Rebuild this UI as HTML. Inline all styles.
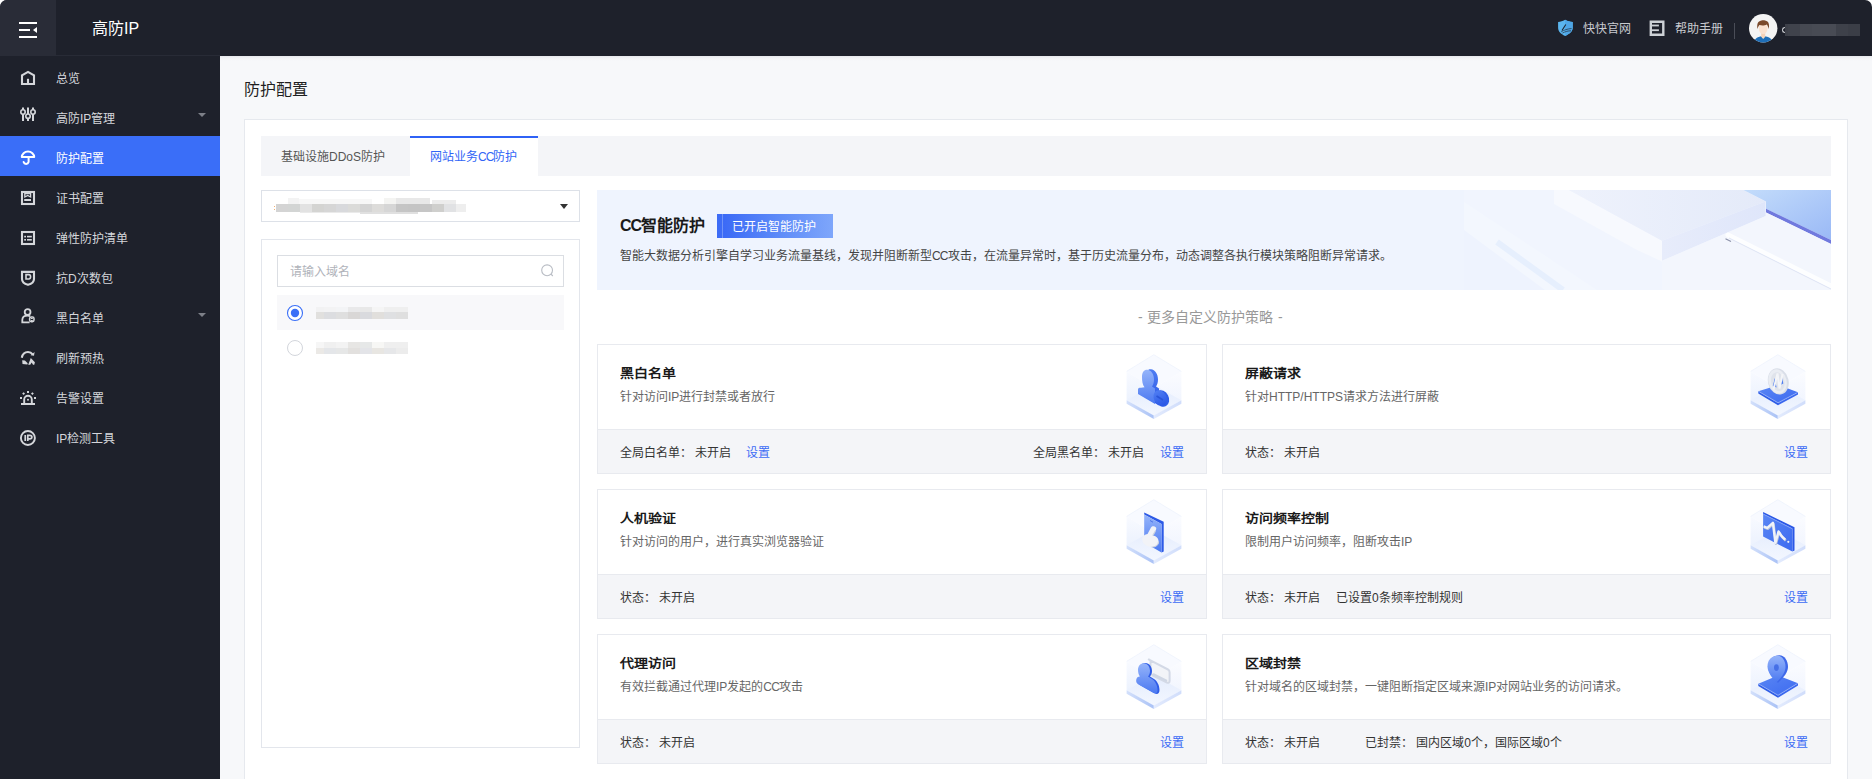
<!DOCTYPE html>
<html lang="zh-CN"><head><meta charset="utf-8">
<style>
*{margin:0;padding:0;box-sizing:border-box}
html,body{width:1872px;height:779px;overflow:hidden;background:#fff}
body{font-family:"Liberation Sans",sans-serif;font-size:12px;color:#333;position:relative}
.a{position:absolute;white-space:nowrap;line-height:20px}
#hdr{position:absolute;left:0;top:0;width:1872px;height:56px;background:#1e212b;border-radius:7px 7px 0 0;overflow:hidden}
#burger{position:absolute;left:0;top:0;width:56px;height:56px;background:#292c37}
#side{position:absolute;left:0;top:56px;width:220px;height:723px;background:#1e212b}
.mi{position:absolute;left:0;width:220px;height:40px}
.mi .t{position:absolute;left:56px;top:13px;line-height:20px;font-size:12px;color:#d5d7db}
.mi svg{position:absolute;left:16px;top:10px}
.mi.on{background:#3a6ef8}
.mi.on .t{color:#fff}
.caret{position:absolute;left:198px;top:17px;width:0;height:0;border-left:4px solid transparent;border-right:4px solid transparent;border-top:4px solid #7d8088}
#main{position:absolute;left:220px;top:56px;width:1652px;height:723px;background:linear-gradient(180deg,#e6e8ec 0,#f2f3f6 2px,#f7f8fa 5px)}
#panel{position:absolute;left:244px;top:119px;width:1604px;height:700px;background:#fff;border:1px solid #e6e9ee}
#tabs{position:absolute;left:261px;top:136px;width:1570px;height:40px;background:#f4f5f8}
.tab{position:absolute;top:0;height:40px}
.tab.on{background:#fff;border-top:2px solid #2f62f6}
.box{position:absolute;border:1px solid #dfe3ea;background:#fff}
.card{position:absolute;width:610px;height:130px;border:1px solid #e8eaef;background:#fff}
.card .ft{position:absolute;left:0;right:0;top:84px;height:44px;background:#f4f5f8;border-top:1px solid #e8eaef}
.card .tt{position:absolute;left:22px;top:19px;font-size:14px;font-weight:bold;color:#1a1a1a;line-height:20px;white-space:nowrap;transform:scaleY(.88);transform-origin:0 10px}
.card .ds{position:absolute;left:22px;top:42px;font-size:12px;color:#666;line-height:20px;white-space:nowrap}
.card .fx{position:absolute;top:13px;font-size:12px;color:#333;line-height:20px;white-space:nowrap}
.lk,.card .fx.lk{color:#3c6cf5}
.card svg.ic{position:absolute;left:524px;top:5px}
</style></head><body>
<svg width="0" height="0" style="position:absolute">
<defs>
<linearGradient id="cbL" x1="0" y1="0" x2="0" y2="1"><stop offset="0" stop-color="#f8faff"/><stop offset="1" stop-color="#e6eefd"/></linearGradient>
<linearGradient id="cbR" x1="0" y1="0" x2="0" y2="1"><stop offset="0" stop-color="#fbfcff"/><stop offset="1" stop-color="#edf2fe"/></linearGradient>
<linearGradient id="plL" x1="0" y1="0" x2="1" y2="0"><stop offset="0" stop-color="#d3e0fb"/><stop offset="1" stop-color="#aac2f6"/></linearGradient>
<linearGradient id="plR" x1="0" y1="0" x2="1" y2="0"><stop offset="0" stop-color="#e3ebfd"/><stop offset="1" stop-color="#d0ddfb"/></linearGradient>
<linearGradient id="plT" x1="0" y1="0" x2="0" y2="1"><stop offset="0" stop-color="#e4ecfd"/><stop offset="1" stop-color="#f3f7ff"/></linearGradient>
<linearGradient id="bl" x1="0" y1="0" x2="0" y2="1"><stop offset="0" stop-color="#95b4fa"/><stop offset="1" stop-color="#4a78f1"/></linearGradient>
<linearGradient id="bd" x1="0" y1="0" x2="0" y2="1"><stop offset="0" stop-color="#4f7df2"/><stop offset="1" stop-color="#2a57e6"/></linearGradient>
<linearGradient id="pad" x1="0" y1="0" x2="1" y2="1"><stop offset="0" stop-color="#5a86f4"/><stop offset="1" stop-color="#3c6af0"/></linearGradient>
<g id="cube">
  <path d="M4.6 21.4L31.8 38V65.5L4.6 50.3Z" fill="url(#cbL)"/>
  <path d="M59.4 21.4L31.8 38V65.5L59.4 50.3Z" fill="url(#cbR)"/>
  <path d="M31.8 4.7L59.4 21.4L31.8 38L4.6 21.4Z" fill="#f8faff"/>
  <path d="M31.8 4.7L59.4 21.4M31.8 4.7L4.6 21.4" stroke="#edf2fd" stroke-width=".8" fill="none"/>
  <path d="M4.6 50.3L31.8 35L59.4 50.3L31.8 65.5Z" fill="url(#plT)"/>
  <path d="M4.6 50.3L31.8 65.5V68.9L4.6 53.7Z" fill="url(#plL)"/>
  <path d="M59.4 50.3L31.8 65.5V68.9L59.4 53.7Z" fill="url(#plR)"/>
</g>
</defs></svg>
<div id="hdr">
  <div id="burger">
    <svg width="56" height="56" style="position:absolute;left:0;top:0">
      <rect x="19" y="22" width="18" height="2" fill="#fff"/>
      <rect x="19" y="29" width="11" height="2" fill="#fff"/>
      <rect x="19" y="36" width="18" height="2" fill="#fff"/>
      <path d="M33 30L37 27V33Z" fill="#fff"/>
    </svg>
  </div>
  <div class="a" style="left:92px;top:19px;font-size:16px;color:#fff">高防IP</div>
  <div style="position:absolute;left:56px;top:55px;width:164px;height:1px;background:#282b36"></div>
  <!-- right header -->
  <svg width="18" height="18" style="position:absolute;left:1557px;top:19px" viewBox="0 0 18 18">
    <path d="M1.1 2.9C3.5 2.9 5.5 2.3 8.1 0.8C10.7 2.3 12.7 2.9 15.7 2.9V8.5C15.7 12.5 12.5 15 8.1 16.9C3.8 15 1.1 12.5 1.1 8.5Z" fill="#5bb5ee"/>
    <path d="M8.1 0.8C10.7 2.3 12.7 2.9 15.7 2.9V8.5C15.7 12.5 12.5 15 8.1 16.9Z" fill="#4ea6e6"/>
    <path d="M8.8 5.5L5 11.5" stroke="#1e212b" stroke-width="1.1"/>
    <path d="M4.2 12.8C7 11 10 10 14.5 9.5M5.5 14C8.5 12.5 11 11.8 14 11.8" stroke="#1e212b" stroke-width=".8" fill="none" opacity=".8"/>
  </svg>
  <div class="a" style="left:1583px;top:19px;font-size:12px;color:#c9cbd0">快快官网</div>
  <svg width="16" height="16" style="position:absolute;left:1649px;top:20px" viewBox="0 0 16 16">
    <path d="M1.8 1.8H14.3V14.7H1.8Z" stroke="#cdd1d6" stroke-width="2.4" fill="none"/>
    <rect x="1.8" y="4.6" width="8.1" height="1.8" fill="#cdd1d6"/>
    <rect x="1.8" y="9.3" width="8.1" height="1.8" fill="#cdd1d6"/>
  </svg>
  <div class="a" style="left:1675px;top:19px;font-size:12px;color:#c9cbd0">帮助手册</div>
  <div style="position:absolute;left:1734px;top:23px;width:1px;height:16px;background:#4a4d57"></div>
  <svg width="29" height="29" style="position:absolute;left:1749px;top:14px" viewBox="0 0 29 29">
    <circle cx="14.2" cy="14.2" r="14.2" fill="#f4f4f4"/>
    <clipPath id="avc"><circle cx="14.2" cy="14.2" r="14.2"/></clipPath>
    <g clip-path="url(#avc)">
      <path d="M4.5 29C5.5 24.5 8.5 22.5 14.2 22C20 22.5 23 24.5 24 29Z" fill="#1f6fb8"/>
      <path d="M11.8 22.2L14.2 25L16.6 22.2Z" fill="#f3e0c8"/>
      <path d="M12.2 18.5H16.2V22.5L14.2 24L12.2 22.5Z" fill="#f6d2b8"/>
      <ellipse cx="14.2" cy="14.5" rx="4.3" ry="5.5" fill="#fbe2d0"/>
      <path d="M8.5 15C7.8 11 8.5 7.8 11 7C12.5 6 16 6 17.5 7C20 8 20.5 11 19.7 15C19 12.5 18.5 11 17.5 10.5C16 11.5 13 11.8 10.5 11C9.5 12 9 13 8.5 15Z" fill="#7b4a2b"/>
    </g>
  </svg>
  <div style="position:absolute;left:1785px;top:24px;width:3px;height:12px;background:#3d4049"></div><div style="position:absolute;left:1788px;top:24px;width:12px;height:12px;background:#40434c"></div><div style="position:absolute;left:1800px;top:24px;width:12px;height:12px;background:#464952"></div><div style="position:absolute;left:1812px;top:24px;width:24px;height:12px;background:#484b54"></div><div style="position:absolute;left:1836px;top:24px;width:12px;height:12px;background:#3e414a"></div><div style="position:absolute;left:1848px;top:24px;width:12px;height:12px;background:#3b3e47"></div><div style="position:absolute;left:1782px;top:27px;width:3px;height:6px;border:1.5px solid #c8cacf;border-right:none;border-radius:3px 0 0 3px"></div>
</div>
<div id="side">
  <div class="mi" style="top:0">
    <svg width="24" height="24" viewBox="0 0 24 24"><path d="M6 18V9.3L12 5.9L18 9.3V18Z" stroke="#d5d7db" stroke-width="2.1" fill="none" stroke-linejoin="miter"/><path d="M12 12.8V18" stroke="#d5d7db" stroke-width="2.1"/></svg>
    <div class="t">总览</div>
  </div>
  <div class="mi" style="top:40px">
    <svg width="24" height="24" viewBox="0 0 24 24" style="top:8px"><g stroke="#d5d7db" stroke-width="2" fill="none"><path d="M7 3.5V17M12 3.5V17M17 3.5V17"/></g><g stroke="#d5d7db" stroke-width="1.6" fill="#1e212b"><circle cx="7" cy="8" r="2.2"/><circle cx="12" cy="12.2" r="2.2"/><circle cx="17" cy="8" r="2.2"/></g></svg>
    <div class="t">高防IP管理</div>
    <div class="caret"></div>
  </div>
  <div class="mi on" style="top:80px">
    <svg width="24" height="24" viewBox="0 0 24 24"><path d="M5.8 11.1A6.2 5.6 0 0 1 18.2 11.1Z" stroke="#fff" stroke-width="2" fill="none" stroke-linejoin="round"/><path d="M12.6 11.5V16A2.6 2.6 0 0 1 7.6 16" stroke="#fff" stroke-width="2" fill="none" stroke-linecap="round"/></svg>
    <div class="t">防护配置</div>
  </div>
  <div class="mi" style="top:120px">
    <svg width="24" height="24" viewBox="0 0 24 24"><rect x="6" y="6" width="12" height="12" stroke="#d5d7db" stroke-width="2.1" fill="none"/><path d="M8.8 7.6H14.6V11L11.7 9.4L8.8 11Z" stroke="#d5d7db" stroke-width="1.3" fill="none" stroke-linejoin="miter"/><rect x="8.2" y="13" width="6.8" height="2" fill="#d5d7db"/></svg>
    <div class="t">证书配置</div>
  </div>
  <div class="mi" style="top:160px">
    <svg width="24" height="24" viewBox="0 0 24 24"><rect x="6" y="6" width="12" height="12" stroke="#d5d7db" stroke-width="2.1" fill="none"/><rect x="8.2" y="9.8" width="1.8" height="1.6" fill="#d5d7db"/><rect x="11" y="9.8" width="4.8" height="1.6" fill="#d5d7db"/><rect x="8.2" y="13" width="1.8" height="1.6" fill="#d5d7db"/><rect x="11" y="13" width="4.8" height="1.6" fill="#d5d7db"/></svg>
    <div class="t">弹性防护清单</div>
  </div>
  <div class="mi" style="top:200px">
    <svg width="24" height="24" viewBox="0 0 24 24"><path d="M6 5.9H18V13C18 16 15 18 12 18.8C9 18 6 16 6 13Z" stroke="#d5d7db" stroke-width="2.1" fill="none"/><path d="M10 8.6H12.8C14 8.6 14.6 9.4 14.6 10.8C14.6 12.2 14 13 12.8 13H10Z" stroke="#d5d7db" stroke-width="1.6" fill="none"/></svg>
    <div class="t">抗D次数包</div>
  </div>
  <div class="mi" style="top:240px">
    <svg width="24" height="24" viewBox="0 0 24 24"><circle cx="11.6" cy="6" r="2.9" stroke="#d5d7db" stroke-width="1.8" fill="none"/><path d="M14.2 10.2C13.4 9.8 12.6 9.7 11.6 9.7C8.2 9.7 6.3 11.6 6.3 14V16.3H13.6" stroke="#d5d7db" stroke-width="1.8" fill="none"/><rect x="13.6" y="10.9" width="4.4" height="4.8" rx="1.6" stroke="#d5d7db" stroke-width="1.5" fill="none"/><rect x="14.8" y="12" width="2" height="1" fill="#d5d7db"/><rect x="14.8" y="14" width="2" height="1" fill="#d5d7db"/></svg>
    <div class="t">黑白名单</div>
    <div class="caret"></div>
  </div>
  <div class="mi" style="top:280px">
    <svg width="24" height="24" viewBox="0 0 24 24"><path d="M5.8 11.7C6.5 8 9 6 12 6C14 6 15.5 6.8 16.6 8.3" stroke="#d5d7db" stroke-width="2.1" fill="none"/><path d="M18.6 5.9L18 9.7L14.6 9.3Z" fill="#d5d7db"/><path d="M6.2 14.2L8.9 14.5L11.7 17.3L11.4 18.6L6.5 18Z" fill="#d5d7db"/><path d="M12.2 18.8L14.8 12L18.9 16.2L18.3 18.8L17 18.8L15.7 16.6L14.2 18.8Z" fill="#d5d7db"/></svg>
    <div class="t">刷新预热</div>
  </div>
  <div class="mi" style="top:320px">
    <svg width="24" height="24" viewBox="0 0 24 24"><path d="M8.2 17V13.5A3.8 3.8 0 0 1 15.8 13.5V17" stroke="#d5d7db" stroke-width="1.9" fill="none"/><rect x="5" y="17" width="14" height="2" fill="#d5d7db"/><rect x="11" y="5" width="2" height="2" fill="#d5d7db"/><rect x="4" y="11" width="2" height="2" fill="#d5d7db"/><rect x="18" y="11" width="2" height="2" fill="#d5d7db"/><rect x="6.6" y="6.6" width="2" height="2" transform="rotate(45 7.6 7.6)" fill="#d5d7db"/><rect x="15.4" y="6.6" width="2" height="2" transform="rotate(45 16.4 7.6)" fill="#d5d7db"/><circle cx="12" cy="13.8" r="1" fill="#d5d7db"/></svg>
    <div class="t">告警设置</div>
  </div>
  <div class="mi" style="top:360px">
    <svg width="24" height="24" viewBox="0 0 24 24"><circle cx="11.9" cy="12" r="7" stroke="#d5d7db" stroke-width="1.9" fill="none"/><rect x="8.4" y="9" width="1.7" height="6" fill="#d5d7db"/><path d="M11.8 15V9.3H13.8C15.2 9.3 15.9 10 15.9 11.1C15.9 12.2 15.2 12.9 13.8 12.9H11.8" stroke="#d5d7db" stroke-width="1.7" fill="none"/></svg>
    <div class="t">IP检测工具</div>
  </div>
</div>
<div id="main"></div>
<div class="a" style="left:244px;top:80px;font-size:16px;color:#1f1f1f">防护配置</div>
<div id="panel"></div>
<div id="tabs">
  <div class="tab" style="left:0;width:149px"><div class="a" style="left:20px;top:11px;color:#555">基础设施DDoS防护</div></div>
  <div class="tab on" style="left:149px;width:128px"><div class="a" style="left:20px;top:9px;color:#3165f6">网站业务<span style="letter-spacing:-1px">CC</span>防护</div></div>
</div>
<!-- dropdown -->
<div class="box" style="left:261px;top:190px;width:319px;height:32px;border-color:#dde1e8"></div>
<div style="position:absolute;left:276px;top:204px;width:12px;height:8px;background:#d4d4d4"></div><div style="position:absolute;left:288px;top:204px;width:12px;height:8px;background:#d3d5d4"></div><div style="position:absolute;left:300px;top:204px;width:12px;height:8px;background:#e2e2e2"></div><div style="position:absolute;left:312px;top:204px;width:12px;height:8px;background:#d4d4d2"></div><div style="position:absolute;left:324px;top:204px;width:12px;height:8px;background:#d6d6d6"></div><div style="position:absolute;left:336px;top:204px;width:12px;height:8px;background:#d8d9dc"></div><div style="position:absolute;left:348px;top:204px;width:12px;height:8px;background:#dbdbd9"></div><div style="position:absolute;left:360px;top:204px;width:12px;height:8px;background:#d4d4d4"></div><div style="position:absolute;left:372px;top:204px;width:12px;height:8px;background:#dddcda"></div><div style="position:absolute;left:384px;top:204px;width:12px;height:8px;background:#d6d6d6"></div><div style="position:absolute;left:396px;top:204px;width:12px;height:8px;background:#c5c5c5"></div><div style="position:absolute;left:408px;top:204px;width:12px;height:8px;background:#c4c4c4"></div><div style="position:absolute;left:420px;top:204px;width:12px;height:8px;background:#c6c6c6"></div><div style="position:absolute;left:432px;top:204px;width:12px;height:8px;background:#cfcfcd"></div><div style="position:absolute;left:444px;top:204px;width:12px;height:8px;background:#e1e2e4"></div><div style="position:absolute;left:456px;top:204px;width:10px;height:8px;background:#eeeeee"></div><div style="position:absolute;left:288px;top:198px;width:11px;height:6px;background:#f3f3f3"></div><div style="position:absolute;left:299px;top:199px;width:73px;height:5px;background:#f7f7f7"></div><div style="position:absolute;left:384px;top:198px;width:12px;height:6px;background:#f4f4f2"></div><div style="position:absolute;left:396px;top:198px;width:34px;height:6px;background:#e8e8e8"></div><div style="position:absolute;left:432px;top:200px;width:24px;height:4px;background:#ececec"></div><div style="position:absolute;left:300px;top:212px;width:60px;height:1px;background:#eaeaea"></div><div style="position:absolute;left:360px;top:212px;width:58px;height:2px;background:#e0e0e0"></div><div style="position:absolute;left:274px;top:206px;width:1px;height:1px;background:#f5b070"></div><div style="position:absolute;left:274px;top:209px;width:1px;height:1px;background:#f5b070"></div>
<div style="position:absolute;left:560px;top:204px;width:0;height:0;border-left:4px solid transparent;border-right:4px solid transparent;border-top:5px solid #333"></div>
<!-- left panel -->
<div class="box" style="left:261px;top:239px;width:319px;height:509px;border-color:#e3e6ec"></div>
<div class="box" style="left:277px;top:255px;width:287px;height:32px;border-color:#dbdee3"></div>
<div class="a" style="left:290px;top:262px;color:#b0b3ba">请输入域名</div>
<svg width="16" height="16" style="position:absolute;left:540px;top:263px" viewBox="0 0 16 16"><circle cx="7.1" cy="7.3" r="5.4" stroke="#b8bcc4" stroke-width="1.1" fill="none"/><path d="M11 11.2L12.8 13" stroke="#b8bcc4" stroke-width="1.1"/></svg>
<div style="position:absolute;left:277px;top:295px;width:287px;height:35px;background:#f8f8fa"></div>
<svg width="18" height="18" style="position:absolute;left:286px;top:304px" viewBox="0 0 18 18"><circle cx="9" cy="9" r="7.5" stroke="#3a6ff7" stroke-width="1.1" fill="#fff"/><circle cx="9" cy="9" r="4.2" fill="#3a6ff7"/></svg>

<svg width="18" height="18" style="position:absolute;left:286px;top:339px" viewBox="0 0 18 18"><circle cx="9" cy="9" r="7.5" stroke="#d3d6dc" stroke-width="1" fill="#fff"/></svg>
<div style="position:absolute;left:316px;top:307px;width:8px;height:5px;background:#f2f2f3"></div><div style="position:absolute;left:316px;top:312px;width:8px;height:7px;background:#e1e0de"></div><div style="position:absolute;left:316px;top:342px;width:8px;height:6px;background:#f6f6f6"></div><div style="position:absolute;left:316px;top:348px;width:8px;height:6px;background:#ebe9e6"></div><div style="position:absolute;left:324px;top:307px;width:12px;height:5px;background:#f3f3f4"></div><div style="position:absolute;left:324px;top:312px;width:12px;height:7px;background:#dcdde0"></div><div style="position:absolute;left:324px;top:342px;width:12px;height:6px;background:#f0f0f0"></div><div style="position:absolute;left:324px;top:348px;width:12px;height:6px;background:#e4e6e9"></div><div style="position:absolute;left:336px;top:307px;width:12px;height:5px;background:#f3f4f6"></div><div style="position:absolute;left:336px;top:312px;width:12px;height:7px;background:#dfdfdf"></div><div style="position:absolute;left:336px;top:342px;width:12px;height:6px;background:#f3f3f3"></div><div style="position:absolute;left:336px;top:348px;width:12px;height:6px;background:#e6e7e7"></div><div style="position:absolute;left:348px;top:307px;width:12px;height:5px;background:#e9e9ea"></div><div style="position:absolute;left:348px;top:312px;width:12px;height:7px;background:#d9d7d6"></div><div style="position:absolute;left:348px;top:342px;width:12px;height:6px;background:#e7e6e4"></div><div style="position:absolute;left:348px;top:348px;width:12px;height:6px;background:#e2e0de"></div><div style="position:absolute;left:360px;top:307px;width:12px;height:5px;background:#e8e8e8"></div><div style="position:absolute;left:360px;top:312px;width:12px;height:7px;background:#d9dade"></div><div style="position:absolute;left:360px;top:342px;width:12px;height:6px;background:#e6e8e8"></div><div style="position:absolute;left:360px;top:348px;width:12px;height:6px;background:#e3e4e8"></div><div style="position:absolute;left:372px;top:307px;width:12px;height:5px;background:#f5f5f5"></div><div style="position:absolute;left:372px;top:312px;width:12px;height:7px;background:#e1dfdc"></div><div style="position:absolute;left:372px;top:342px;width:12px;height:6px;background:#f7f7f5"></div><div style="position:absolute;left:372px;top:348px;width:12px;height:6px;background:#e8e6e2"></div><div style="position:absolute;left:384px;top:307px;width:12px;height:5px;background:#efefef"></div><div style="position:absolute;left:384px;top:312px;width:12px;height:7px;background:#dfe0e2"></div><div style="position:absolute;left:384px;top:342px;width:12px;height:6px;background:#efefef"></div><div style="position:absolute;left:384px;top:348px;width:12px;height:6px;background:#e6e7e9"></div><div style="position:absolute;left:396px;top:307px;width:12px;height:5px;background:#efefef"></div><div style="position:absolute;left:396px;top:312px;width:12px;height:7px;background:#dfdfdf"></div><div style="position:absolute;left:396px;top:342px;width:12px;height:6px;background:#efefef"></div><div style="position:absolute;left:396px;top:348px;width:12px;height:6px;background:#ececec"></div>
<!-- banner -->
<div id="banner" style="position:absolute;left:597px;top:190px;width:1234px;height:100px;background:linear-gradient(90deg,#eff4fe 0,#eff4fe 70%,#f0f4fd 100%);overflow:hidden">
<svg width="1234" height="100" style="position:absolute;left:0;top:0" viewBox="0 0 1234 100">
<defs>
<linearGradient id="bnB" x1="0" y1="0" x2="1" y2="1"><stop offset="0" stop-color="#c3dcfb"/><stop offset="1" stop-color="#9ab9f6"/></linearGradient>
<linearGradient id="bnT" x1="0" y1="0" x2="1" y2="0"><stop offset="0" stop-color="#eef2fc"/><stop offset="1" stop-color="#e4eaf9"/></linearGradient>
<linearGradient id="bnF" x1="0" y1="0" x2="1" y2="0"><stop offset="0" stop-color="#e7ecfb"/><stop offset="1" stop-color="#dfe6fa"/></linearGradient>
</defs>
<path d="M867 0H1234V100H867Z" fill="#f1f5fe"/>
<path d="M867 32L957 100H867Z" fill="#eef3fe"/>
<path d="M867 40L948 100H1000L867 12Z" fill="#f3f7fe"/>
<path d="M900 52L966 100" stroke="#e6effd" stroke-width="6"/>
<path d="M957 0H972L1065 50.7V71.4L1040 60L957 14Z" fill="#f7f9fe"/>
<path d="M972 0H1146.5L1168.5 11.4L1065 50.7Z" fill="url(#bnT)"/>
<path d="M1065 50.7L1168.5 11.4V26L1065 70.8Z" fill="url(#bnF)"/>
<path d="M1146.5 0H1234V50L1169 18.7V11.4Z" fill="url(#bnB)"/>
<path d="M1169 18.7L1234 50V54L1169 22.5Z" fill="#7079de"/>
<path d="M1169 22.5L1234 54V100H1065V70.8L1169 26Z" fill="#f3f6fd"/>
<path d="M1131 45L1234 96" stroke="#fdfeff" stroke-width="5" stroke-linecap="round"/>
<path d="M1128.5 48.7L1134 51.5" stroke="#8a90a8" stroke-width="1.2"/>
<path d="M1132 48L1234 99" stroke="#dde3f4" stroke-width="1"/>
</svg>
</div>
<div class="a" style="left:620px;top:216px;font-size:16px;font-weight:bold;color:#1a1a1a"><span style="letter-spacing:-1px">CC</span>智能防护</div>
<div style="position:absolute;left:717px;top:214px;width:116px;height:24px;background:linear-gradient(90deg,#3d6cf6 0,#3d6cf6 5px,#6f93f8 5px,#6f93f8 6px,#3b6af6 6px,#5f8cf8 55%,#7ea6fb 100%)"></div>
<div class="a" style="left:732px;top:217px;color:#fff">已开启智能防护</div>
<div class="a" style="left:620px;top:246px;color:#444">智能大数据分析引擎自学习业务流量基线，发现并阻断新型<span style="letter-spacing:-.8px">CC</span>攻击，在流量异常时，基于历史流量分布，动态调整各执行模块策略阻断异常请求。</div>
<div class="a" style="left:1138px;top:307px;font-size:14px;color:#999">-</div><div class="a" style="left:1147px;top:307px;font-size:14px;color:#999">更多自定义防护策略</div><div class="a" style="left:1278px;top:307px;font-size:14px;color:#999">-</div>
<!-- cards -->
<div class="card" style="left:597px;top:344px">
  <svg class="ic" width="64" height="74" viewBox="0 0 64 74"><use href="#cube"/><path d="M23.5 27C23.5 21 26 19 29 19.3C33 19.6 36 24 36 29.5C36 33 35 35 34 36.5L37 38.5V55.5L19.5 45V40C19.5 38.5 21 38 23 38L26 37.5C24 35 23.5 31 23.5 27Z" fill="url(#bd)"/>
<path d="M20 27C20 21.5 22.5 19.5 25.5 19.8C29 20.2 32 24 32 29.5C32 33 31 35 30 36.5L33 38.5V54L16 44V39.5C16 38.2 17 37.8 19 37.8L22.5 37.3C20.5 35 20 31 20 27Z" fill="url(#bl)"/>
<ellipse cx="40" cy="48.5" rx="6.8" ry="8.6" transform="rotate(-28 40 48.5)" fill="#2f5ee8"/>
<ellipse cx="38.2" cy="48" rx="6.3" ry="8.2" transform="rotate(-28 38.2 48)" fill="url(#bd)"/>
<path d="M34.5 46L41 50" stroke="#2a55d8" stroke-width="1.6"/></svg><div class="tt">黑白名单</div><div class="ds">针对访问IP进行封禁或者放行</div>
  <div class="ft"><div class="fx" style="left:22px">全局白名单： 未开启</div><div class="fx lk" style="left:148px">设置</div>
  <div class="fx" style="left:435px">全局黑名单： 未开启</div><div class="fx lk" style="left:562px">设置</div></div>
</div>
<div class="card" style="left:1222px;top:344px;width:609px">
  <svg class="ic" style="left:523px" width="64" height="74" viewBox="0 0 64 74"><use href="#cube"/><path d="M12.3 41.2L32.5 35L52 42.3L32 53Z" fill="url(#pad)"/>
<path d="M12.3 41.2L32 53V55.3L12.3 43.5Z" fill="#2f5de6"/><path d="M52 42.3L32 53V55.3L52 44.6Z" fill="#3a67ee"/>
<path d="M12.8 41.5L32 52.7L51.6 42.5" stroke="#a9c0fa" stroke-width=".6" fill="none"/>
<ellipse cx="32.3" cy="31.4" rx="10.3" ry="13.3" transform="rotate(-14 32.3 31.4)" fill="#d9dee8"/>
<ellipse cx="31.6" cy="31.4" rx="9" ry="12.3" transform="rotate(-14 31.6 31.4)" fill="#eaedf3"/>
<ellipse cx="31.8" cy="31.8" rx="6.6" ry="9.6" transform="rotate(-14 31.8 31.8)" fill="#dfe3eb"/>
<path d="M26.8 36L28.8 28L30.5 37.5Z" fill="#4d7bf0"/><path d="M34.5 35L36 27.5L37.3 33.5Z" fill="#4d7bf0"/>
<path d="M27.5 39.5L31.5 23.5M31.5 23.5L33.5 38.5M33.5 38.5L36.5 24" stroke="#f4f5f8" stroke-width="2" fill="none"/></svg><div class="tt">屏蔽请求</div><div class="ds">针对HTTP/HTTPS请求方法进行屏蔽</div>
  <div class="ft"><div class="fx" style="left:22px">状态： 未开启</div><div class="fx lk" style="left:561px">设置</div></div>
</div>
<div class="card" style="left:597px;top:489px">
  <svg class="ic" width="64" height="74" viewBox="0 0 64 74"><use href="#cube"/><path d="M22.2 17.5L41.7 26.7V56.5L39.5 57.5V29L22.2 19.5Z" fill="#2d5ae6"/>
<path d="M22.2 19.5L39.5 29V57.5L22.2 47.5Z" fill="url(#bl)"/>
<path d="M28 25.5L31 27.2" stroke="#4b74ea" stroke-width="1"/>
<path d="M30 31.6C31 31 33 31.6 34 32.6C34.6 33.4 34.2 34.6 33.4 36L30.8 40.6C33.5 41 36.6 43 36.6 46.5C36.6 50 33.5 52.2 29.5 52C25 51.5 21 49 20.5 46C20 43.5 20.5 41.5 22 40.5C23 39.8 24.2 39.2 25.5 39L29 32.6C29.3 32.1 29.6 31.8 30 31.6Z" fill="#f2f3f7"/>
<path d="M33.4 36L30.8 40.6M36.6 46.5C36.6 50 33.5 52.2 29.5 52" stroke="#cdd3df" stroke-width="1.2" fill="none"/></svg><div class="tt">人机验证</div><div class="ds">针对访问的用户，进行真实浏览器验证</div>
  <div class="ft"><div class="fx" style="left:22px">状态： 未开启</div><div class="fx lk" style="left:562px">设置</div></div>
</div>
<div class="card" style="left:1222px;top:489px;width:609px">
  <svg class="ic" style="left:523px" width="64" height="74" viewBox="0 0 64 74"><use href="#cube"/><path d="M17.1 17L48.5 32.3V55.5L46.4 56.5V33.8L17.1 19Z" fill="#2a57e6"/>
<path d="M17.1 19L46.4 33.8V56.5L17.1 41.6Z" fill="url(#pad)"/><path d="M17.1 19L46.4 33.8" stroke="#7d9ff6" stroke-width="1"/>
<polyline points="18.2,32.4 21.8,33.9 27.5,28.8 30,48.8 33.1,37.5 36.2,42.1 39.8,45.7" stroke="#b9c3da" stroke-width="2.4" fill="none" stroke-linejoin="round"/><polyline points="17.6,31.4 21.2,32.9 26.9,27.8 29.4,47.8 32.5,36.5 35.6,41.1 39.2,44.7" stroke="#f1f3f8" stroke-width="2.4" fill="none" stroke-linejoin="round"/>
<circle cx="42.3" cy="46.8" r="1.1" fill="#eef1f7"/></svg><div class="tt">访问频率控制</div><div class="ds">限制用户访问频率，阻断攻击IP</div>
  <div class="ft"><div class="fx" style="left:22px">状态： 未开启</div><div class="fx" style="left:113px">已设置0条频率控制规则</div><div class="fx lk" style="left:561px">设置</div></div>
</div>
<div class="card" style="left:597px;top:634px">
  <svg class="ic" width="64" height="74" viewBox="0 0 64 74"><use href="#cube"/><path d="M27 19.6L46 29.5C47 30 47.6 31 47.6 32.2V41C47.6 42.5 46.5 43.3 45 42.6L31 35.5C29.5 34.8 28.5 33.5 28.5 32V21C28.5 19.8 26 19.2 27 19.6Z" fill="#f2f4f8" stroke="#d3d9e6" stroke-width="2"/>
<path d="M31 34L45 41" stroke="#cfd6e4" stroke-width="2"/>
<path d="M23.5 23C27.5 23 30 27 30 31C30 33.5 29 35.5 28 36.5L32 39C35 41 37.5 45 37.5 50C37.5 54 35 54.5 33 53.5L18 45C15.5 43.5 15 42 15.2 40C15.5 37.5 17.5 36.5 19.5 36.5C18.2 35 17.3 32.5 17.3 30C17.3 25.5 19.8 23 23.5 23Z" fill="#2f5de8"/>
<path d="M22 23.3C25.5 23.3 28 27 28 31C28 33.5 27 35.5 26 36.5L30 39C33 41 35.5 45 35.5 50C35.5 53.8 33.5 54 31.5 53L16.5 44.5C14.5 43.3 14 41.8 14.2 40C14.5 37.5 16 36.5 18 36.5C16.8 35 16 32.5 16 30C16 25.8 18.5 23.3 22 23.3Z" fill="url(#bl)"/></svg><div class="tt">代理访问</div><div class="ds">有效拦截通过代理IP发起的<span style="letter-spacing:-.8px">CC</span>攻击</div>
  <div class="ft"><div class="fx" style="left:22px">状态： 未开启</div><div class="fx lk" style="left:562px">设置</div></div>
</div>
<div class="card" style="left:1222px;top:634px;width:609px">
  <svg class="ic" style="left:523px" width="64" height="74" viewBox="0 0 64 74"><use href="#cube"/><g transform="translate(0 -1.5)"><path d="M12.3 45.2L32 37L52 44.7L32 57Z" fill="url(#pad)"/>
<path d="M12.3 45.2L32 57V59.3L12.3 47.5Z" fill="#2f5de6"/><path d="M52 44.7L32 57V59.3L52 47Z" fill="#3a67ee"/>
<path d="M12.8 45.5L32 56.7L51.6 44.9" stroke="#a9c0fa" stroke-width=".6" fill="none"/></g><g transform="translate(0 -1.2)">
<path d="M33.5 16.5C38.5 16.5 42 22 42 28C42 33 38.5 38 32 44L31 43.5C26 38 22.5 33 22.5 27.5C22.5 21 27 16.5 33.5 16.5Z" fill="#3e68ea"/>
<path d="M31.5 17C36 17 39.5 22 39.5 28C39.5 33 36.5 37.5 30.4 43.7C25 38 21.5 33 21.5 27.5C21.5 21.5 25.5 17 31.5 17Z" fill="url(#bl)"/>
<ellipse cx="30.4" cy="28.8" rx="2.4" ry="3.4" fill="#4670e6"/></g></svg><div class="tt">区域封禁</div><div class="ds">针对域名的区域封禁，一键阻断指定区域来源IP对网站业务的访问请求。</div>
  <div class="ft"><div class="fx" style="left:22px">状态： 未开启</div><div class="fx" style="left:142px">已封禁： 国内区域0个，国际区域0个</div><div class="fx lk" style="left:561px">设置</div></div>
</div>
</body></html>
